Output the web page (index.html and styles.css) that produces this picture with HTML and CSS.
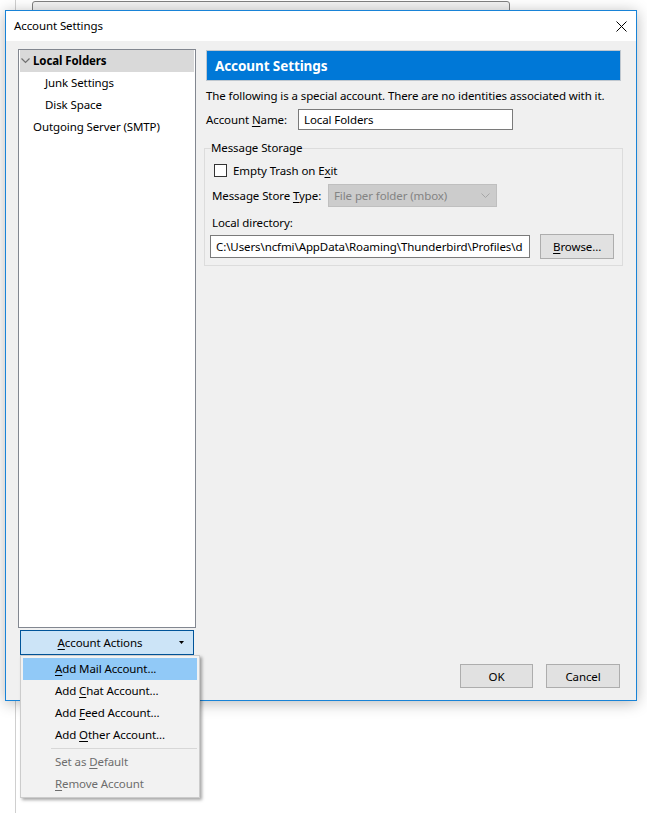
FILE: index.html
```html
<!DOCTYPE html>
<html>
<head>
<meta charset="utf-8">
<title>Account Settings</title>
<link rel="stylesheet" href="styles.css">
</head>
<body>
  <div class="desk-line"></div>
  <div class="desk-tab"></div>

  <div class="window">
    <div class="titlebar">
      <span class="title">Account Settings</span>
      <svg class="close" width="11" height="11" viewBox="0 0 11 11"><path d="M0.5 0.5 L10.5 10.5 M10.5 0.5 L0.5 10.5" stroke="#000" stroke-width="1" fill="none"/></svg>
    </div>

    <div class="body">
      <div class="left">
        <div class="tree">
          <div class="row sel">
            <svg class="twisty" width="9" height="6" viewBox="0 0 9 6"><path d="M0.5 0.5 L4.5 4.5 L8.5 0.5" stroke="#707070" stroke-width="1.2" fill="none"/></svg>
            <span>Local Folders</span>
          </div>
          <div class="row child">Junk Settings</div>
          <div class="row child">Disk Space</div>
          <div class="row top">Outgoing Server (SMTP)</div>
        </div>
        <div class="actions">
          <span class="actions-label"><u>A</u>ccount Actions</span>
          <svg class="drop" width="5" height="3" viewBox="0 0 5 3"><path d="M0 0 H5 L2.5 3 Z" fill="#000"/></svg>
        </div>
      </div>

      <div class="right">
        <div class="banner">Account Settings</div>
        <p class="note">The following is a special account. There are no identities associated with it.</p>
        <div class="name-row">
          <span class="name-label">Account <u>N</u>ame:</span>
          <div class="field name-field">Local Folders</div>
        </div>

        <fieldset class="storage">
          <legend>Message Storage</legend>
          <div class="check-row">
            <span class="checkbox"></span>
            <span>Empty Trash on E<u>x</u>it</span>
          </div>
          <div class="select-row">
            <span class="store-label">Message Store <u>T</u>ype:</span>
            <div class="select">
              <span>File per folder (mbox)</span>
              <svg width="9" height="5" viewBox="0 0 9 5"><path d="M0.5 0.5 L4.5 4.5 L8.5 0.5" stroke="#a6a6a6" stroke-width="1" fill="none"/></svg>
            </div>
          </div>
          <div class="dir-label">Local directory:</div>
          <div class="path-row">
            <div class="field path-field">C:\Users\ncfmi\AppData\Roaming\Thunderbird\Profiles\d</div>
            <div class="btn browse"><u>B</u>rowse...</div>
          </div>
        </fieldset>

        <div class="footer">
          <div class="btn ok">OK</div>
          <div class="btn cancel">Cancel</div>
        </div>
      </div>
    </div>
  </div>

  <div class="menu">
    <div class="item hl"><u>A</u>dd Mail Account...</div>
    <div class="item">Add <u>C</u>hat Account...</div>
    <div class="item">Add <u>F</u>eed Account...</div>
    <div class="item">Add <u>O</u>ther Account...</div>
    <div class="sep"></div>
    <div class="item off">Set as <u>D</u>efault</div>
    <div class="item off"><u>R</u>emove Account</div>
  </div>
</body>
</html>
```

FILE: styles.css
```css
* { box-sizing: border-box; }

body {
  margin: 0;
  width: 647px;
  height: 813px;
  position: relative;
  overflow: hidden;
  background: #fff;
  font-family: "Noto Sans", sans-serif;
  font-size: 11.5px;
  letter-spacing: -0.1px;
  color: #000;
}

u { text-decoration: underline; text-underline-offset: 2px; }

/* desktop behind the dialog */
.desk-line {
  position: absolute;
  left: 15px;
  top: 0;
  bottom: 0;
  width: 1px;
  background: #cfcfcf;
}

.desk-tab {
  position: absolute;
  left: 32px;
  top: 1px;
  width: 478px;
  height: 30px;
  border: 1px solid #808080;
  border-radius: 3px;
  background: #f3f3f3;
}

/* dialog window */
.window {
  position: absolute;
  left: 5px;
  top: 10px;
  width: 632px;
  height: 691px;
  border: 1px solid #1883d7;
  background: #f0f0f0;
  box-shadow: 0 2px 14px rgba(0, 0, 0, 0.28);
  display: flex;
  flex-direction: column;
}

.titlebar {
  flex: none;
  height: 30px;
  background: #fff;
  display: flex;
  align-items: center;
  justify-content: space-between;
  padding: 0 9px 0 8px;
}

.title { line-height: 16px; }

.body {
  flex: 1;
  min-height: 0;
  display: flex;
  gap: 10px;
  padding: 8px 15px 12px 12px;
}

/* left column: account tree */
.left {
  width: 178px;
  display: flex;
  flex-direction: column;
}

.tree {
  height: 579px;
  border: 1px solid #828790;
  background: #fff;
  padding: 0 1px;
}

.row {
  height: 22px;
  line-height: 20px;
  display: flex;
  align-items: center;
  white-space: nowrap;
}

.row.sel {
  background: #d9d9d9;
  font-weight: bold;
  padding-left: 1px;
}

.twisty { margin-right: 3px; }

.row.child { padding-left: 25px; }
.row.top { padding-left: 13px; }

.actions {
  margin: 2px 2px 0;
  height: 25px;
  background: #cce4f7;
  border: 1px solid #005499;
  display: flex;
  align-items: center;
  padding-right: 9px;
}

.actions-label {
  flex: 1;
  text-align: center;
}

/* right column: settings page */
.right {
  width: 415px;
  display: flex;
  flex-direction: column;
  padding-top: 1px;
}

.banner {
  height: 31px;
  background: #0078d7;
  border: 1px solid #bfc7cf;
  color: #fff;
  font-weight: bold;
  font-size: 13.5px;
  padding-left: 8px;
  display: flex;
  align-items: center;
}

.note {
  margin: 7px 0 0;
  line-height: 16px;
  white-space: nowrap;
}

.name-row {
  margin-top: 5px;
  height: 21px;
  display: flex;
  align-items: center;
}

.name-label { width: 92px; }

.field {
  background: #fff;
  border: 1px solid #7a7a7a;
  white-space: nowrap;
  overflow: hidden;
}

.name-field {
  width: 215px;
  height: 21px;
  line-height: 19px;
  padding-left: 5px;
}

.storage {
  margin: 10px -2px 0;
  border: 1px solid #dcdcdc;
  padding: 6px 8px 6px 7px;
  min-width: 0;
}

.storage legend {
  padding: 0;
  margin-left: -1px;
  line-height: 16px;
}

.check-row {
  height: 16px;
  display: flex;
  align-items: center;
  gap: 6px;
}

.checkbox {
  width: 13px;
  height: 13px;
  margin-left: 2px;
  border: 1px solid #333;
  background: #fff;
}

.select-row {
  margin-top: 6px;
  height: 23px;
  display: flex;
  align-items: center;
}

.store-label { width: 116px; }

.select {
  width: 169px;
  height: 23px;
  background: #cccccc;
  border: 1px solid #bfbfbf;
  color: #838383;
  display: flex;
  align-items: center;
  justify-content: space-between;
  padding: 0 6px 0 5px;
}

.dir-label {
  margin-top: 8px;
  line-height: 16px;
}

.path-row {
  margin-top: 3px;
  height: 25px;
  display: flex;
  align-items: center;
  gap: 10px;
}

.path-field {
  width: 321px;
  height: 23px;
  line-height: 21px;
  margin-left: -2px;
  padding-left: 5px;
}

.btn {
  height: 24px;
  background: #e1e1e1;
  border: 1px solid #adadad;
  display: flex;
  align-items: center;
  justify-content: center;
}

.browse { width: 74px; height: 25px; }

.footer {
  margin-top: auto;
  display: flex;
  justify-content: flex-end;
  gap: 13px;
  padding-right: 1px;
}

.ok { width: 73px; }
.cancel { width: 74px; }

/* account actions popup */
.menu {
  position: absolute;
  left: 20px;
  top: 655px;
  width: 180px;
  height: 143px;
  border: 1px solid #cccccc;
  background: #f2f2f2;
  padding: 2px;
  box-shadow: 2px 2px 3px rgba(0, 0, 0, 0.35);
}

.item {
  height: 22px;
  line-height: 22px;
  padding-left: 32px;
  white-space: nowrap;
}

.item.hl { background: #91c9f7; }
.item.off { color: #6d6d6d; }

.sep {
  height: 1px;
  margin: 2px 0 2px 28px;
  background: #d7d7d7;
}
```
